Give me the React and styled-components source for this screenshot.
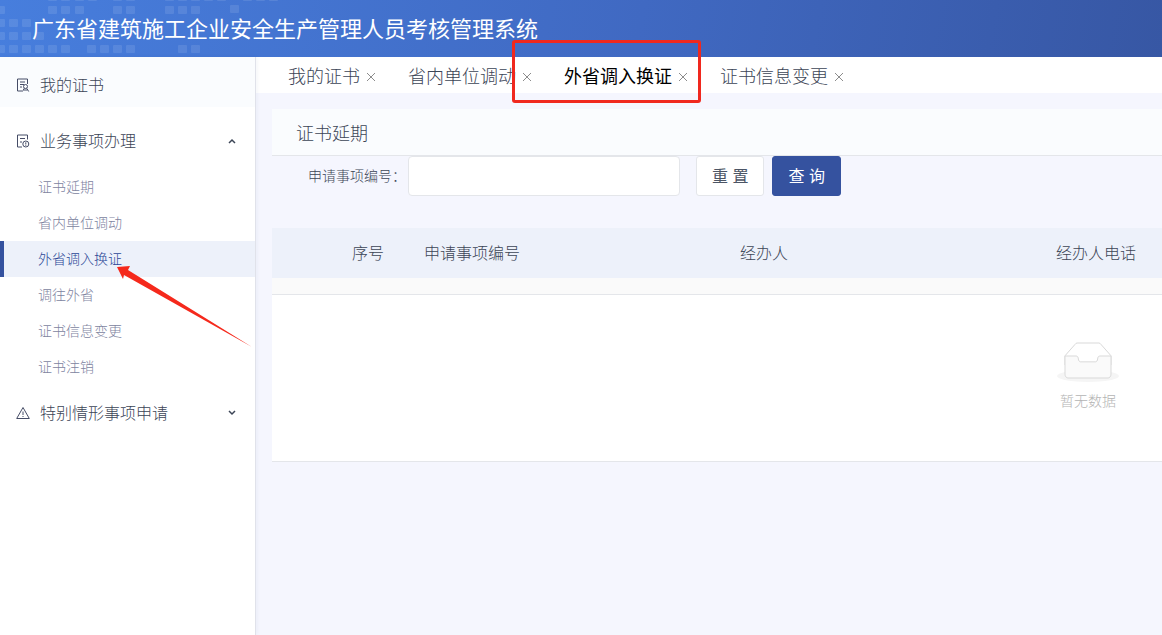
import styled, { createGlobalStyle } from 'styled-components';

const MENU = ['证书延期', '省内单位调动', '外省调入换证', '调往外省', '证书信息变更', '证书注销'];
const TABS = ['我的证书', '省内单位调动', '外省调入换证', '证书信息变更'];
const ACTIVE = '外省调入换证';

// lit squares of the header pattern: [y, [x, ...]]
const DOTS = [
  [-7, [48, 61, 75, 88, 113, 126, 165, 178, 191, 204, 217, 243, 256, 269]],
  [6, [-4, 48, 61, 75, 113, 126, 165, 178, 191]],
  [5, [230]],
  [19, [-4, 9, 22]],
  [32, [-4, 9, 22, 35]],
  [45, [-4, 9, 22, 35, 48, 61, 87, 100, 113, 126, 178, 191]],
];

const CertIcon = () => (
  <Glyph viewBox='0 0 14 14'>
    <path d='M11.500 6V1h-10v12H6M4 4h5M4 6.500h4M4 9h2' />
    <circle cx='9.500' cy='8.500' r='2' />
    <path d='M8.200 10.300L6.500 13.500M10.800 10.300l1.900 3.200M8 12h3.500' />
  </Glyph>
);

const TodoIcon = () => (
  <Glyph viewBox='0 0 14 14'>
    <path d='M11.500 5.500V1h-10v12H6' />
    <path d='M4 4.500h5M4 8h2' />
    <circle cx='9.800' cy='10' r='3' />
    <path d='M9.800 8.300v2.200M9.800 11v.8' />
  </Glyph>
);

const WarnIcon = () => (
  <Glyph viewBox='0 0 14 14'>
    <path d='M7 1.500L13.300 12.500H.700z' />
    <path d='M7 5.500v3.500M7 10v1' />
  </Glyph>
);

const EmptyIcon = () => (
  <EmptyPic viewBox='0 0 64 41'>
    <g transform='translate(0 1)' fill='none' fillRule='evenodd'>
      <ellipse fill='#f5f5f5' cx='32' cy='33' rx='31' ry='6' />
      <g fillRule='nonzero' stroke='#d9d9d9'>
        <path
          fill='#fff'
          d='M55 12.760L44.854 1.258C44.367.474 43.656 0 42.907 0H21.093c-.749 0-1.460.474-1.947 1.257L9 12.761V22h46v-9.240z'
        />
        <path
          fill='#fafafa'
          d='M41.613 15.931c0-1.605.994-2.930 2.227-2.931H55v18.137C55 33.260 53.680 35 52.050 35h-40.100C10.320 35 9 33.259 9 31.137V13h11.160c1.233 0 2.227 1.323 2.227 2.928v.022c0 1.605 1.005 2.901 2.237 2.901h14.752c1.232 0 2.237-1.308 2.237-2.913v-.007z'
        />
      </g>
    </g>
  </EmptyPic>
);

const App = () => {
  return (
    <>
      <GlobalStyle />
      <Page>
        <Header>
          <Pattern aria-hidden='true'>
            {DOTS.map(([y, xs]) => xs.map((x) => <rect key={`${x}-${y}`} x={x} y={y} width='9' height='8' rx='1' />))}
          </Pattern>
          <Title>广东省建筑施工企业安全生产管理人员考核管理系统</Title>
        </Header>
        <Body>
          <Sidebar>
            <Group $shade>
              <CertIcon />
              <span>我的证书</span>
            </Group>
            <Group>
              <TodoIcon />
              <span>业务事项办理</span>
              <Chevron viewBox='0 0 12 12'>
                <path d='M3 8l3-3 3 3' />
              </Chevron>
            </Group>
            <SubMenu>
              {MENU.map((item) => (
                <li key={item}>
                  <SubLink href='#' $active={item === ACTIVE}>
                    {item}
                  </SubLink>
                </li>
              ))}
            </SubMenu>
            <Group>
              <WarnIcon />
              <span>特别情形事项申请</span>
              <Chevron viewBox='0 0 12 12'>
                <path d='M3 4l3 3 3-3' />
              </Chevron>
            </Group>
            <Arrow viewBox='0 0 136 82' aria-hidden='true'>
              <path d='M0 1L13 0l-2 4L135 81 7 9l-1 4z' />
            </Arrow>
          </Sidebar>
          <Main>
            <TabBar>
              {TABS.map((tab) => (
                <Tab key={tab}>
                  <TabName type='button' $active={tab === ACTIVE}>
                    {tab}
                  </TabName>
                  <Close type='button' aria-label={`关闭${tab}`}>
                    <svg width='10' height='10' viewBox='0 0 10 10'>
                      <path d='M1 1l8 8M9 1l-8 8' />
                    </svg>
                  </Close>
                  {tab === ACTIVE && <Mark />}
                </Tab>
              ))}
            </TabBar>
            <Content>
              <PanelTitle>证书延期</PanelTitle>
              <Search>
                <label htmlFor='itemNo'>申请事项编号：</label>
                <input id='itemNo' type='text' />
                <Button type='reset'>重 置</Button>
                <Button type='submit' $primary>
                  查 询
                </Button>
              </Search>
              <TableWrap>
                <Table>
                  <colgroup>
                    <col width='136' />
                    <col width='316' />
                    <col width='316' />
                    <col width='316' />
                    <col />
                  </colgroup>
                  <thead>
                    <tr>
                      <th className='index'>序号</th>
                      <th>申请事项编号</th>
                      <th>经办人</th>
                      <th>经办人电话</th>
                      <th aria-label='操作' />
                    </tr>
                  </thead>
                  <tbody>
                    <tr className='gap'>
                      <td colSpan='5' />
                    </tr>
                    <tr>
                      <td colSpan='5' className='empty'>
                        <EmptyIcon />
                        <p>暂无数据</p>
                      </td>
                    </tr>
                  </tbody>
                </Table>
              </TableWrap>
            </Content>
          </Main>
        </Body>
      </Page>
    </>
  );
};

const GlobalStyle = createGlobalStyle`
  * {
    box-sizing: border-box;
  }
  body {
    margin: 0;
    background: #f5f6fe;
    color: #3c4556;
    font-family: 'Noto Sans CJK SC', sans-serif;
    font-size: 16px;
    font-weight: 300;
  }
  button, input {
    font: inherit;
    color: inherit;
  }
`;

const Page = styled.div`
  display: flex;
  flex-direction: column;
  min-height: 100vh;
`;

const Header = styled.header`
  position: relative;
  height: 57px;
  padding: 12px 32px;
  overflow: hidden;
  background: linear-gradient(100deg, #477edd 0%, #4069c2 55%, #3757a4 100%);
`;

const Pattern = styled.svg`
  position: absolute;
  top: 0;
  left: 0;
  width: 290px;
  height: 57px;
  fill: rgba(255, 255, 255, 0.1);
`;

const Title = styled.h1`
  position: relative;
  margin: 0;
  color: #fff;
  font-size: 22px;
  font-weight: 400;
  line-height: 30px;
  white-space: nowrap;
`;

const Body = styled.div`
  display: flex;
  flex: 1;
`;

const Sidebar = styled.nav`
  position: relative;
  flex: 0 0 256px;
  background: #fff;
  border-right: 1px solid #e0e2ea;
  box-shadow: 1px 0 4px rgba(40, 60, 120, 0.06);
`;

const Group = styled.div`
  display: flex;
  align-items: center;
  gap: 10px;
  height: ${({ $shade }) => ($shade ? '50px' : '56px')};
  margin-bottom: ${({ $shade }) => ($shade ? '6px' : '0')};
  padding: ${({ $shade }) => ($shade ? '6px 16px 0' : '0 16px')};
  background: ${({ $shade }) => ($shade ? '#fafcfe' : '#fff')};
  span {
    padding-bottom: 2px;
  }
`;

const Glyph = styled.svg`
  width: 14px;
  height: 14px;
  fill: none;
  stroke: #454c66;
`;

const Chevron = styled.svg`
  width: 12px;
  height: 12px;
  margin-left: auto;
  margin-right: 1px;
  fill: none;
  stroke: #3c4556;
  stroke-width: 1.5;
`;

const SubMenu = styled.ul`
  margin: 0;
  padding: 0;
  list-style: none;
`;

const SubLink = styled.a`
  display: block;
  height: 36px;
  padding-left: 34px;
  border-left: 4px solid ${({ $active }) => ($active ? '#35529f' : 'transparent')};
  background: ${({ $active }) => ($active ? '#edf1fa' : 'transparent')};
  color: ${({ $active }) => ($active ? '#2c4897' : '#80849f')};
  font-size: 14px;
  line-height: 34px;
  text-decoration: none;
`;

const Arrow = styled.svg`
  position: absolute;
  top: 209px;
  left: 117px;
  width: 136px;
  height: 82px;
  fill: #f5291c;
`;

const Main = styled.main`
  flex: 1;
  min-width: 0;
`;

const TabBar = styled.div`
  display: flex;
  gap: 32px;
  height: 36px;
  padding: 0 32px;
  background: #fff;
`;

const Tab = styled.div`
  position: relative;
  display: flex;
  gap: 6px;
`;

const TabName = styled.button`
  padding: 0;
  border: 0;
  background: none;
  color: ${({ $active }) => ($active ? '#000' : '#3c4556')};
  font-size: 18px;
  font-weight: ${({ $active }) => ($active ? 400 : 300)};
  line-height: 34px;
  white-space: nowrap;
`;

const Close = styled.button`
  display: flex;
  align-items: center;
  padding: 4px 0 0;
  border: 0;
  background: none;
  svg {
    fill: none;
    stroke: #8c8c8c;
  }
`;

const Mark = styled.span`
  position: absolute;
  top: -17px;
  left: -52px;
  width: 189px;
  height: 63px;
  border: 3px solid #f0281e;
  border-radius: 3px;
  pointer-events: none;
`;

const Content = styled.div`
  padding: 16px 0 0 16px;
`;

const PanelTitle = styled.h2`
  height: 47px;
  margin: 0;
  padding-left: 24px;
  border-bottom: 1px solid #e4e6ea;
  background: #fafcfe;
  font-size: 18px;
  font-weight: 300;
  line-height: 46px;
`;

const Search = styled.form`
  display: flex;
  padding-left: 36px;
  label {
    width: 100px;
    font-size: 14px;
    line-height: 38px;
    white-space: nowrap;
  }
  input {
    width: 272px;
    height: 40px;
    margin-right: 16px;
    padding: 0 12px;
    border: 1px solid #e4e6ea;
    border-radius: 4px;
    background: #fff;
  }
`;

const Button = styled.button`
  height: 40px;
  min-width: 68px;
  margin-right: 8px;
  padding: 0 15px 2px;
  border: 1px solid ${({ $primary }) => ($primary ? '#35529f' : '#e4e6ea')};
  border-radius: 3px;
  background: ${({ $primary }) => ($primary ? '#35529f' : '#fff')};
  color: ${({ $primary }) => ($primary ? '#fff' : '#4c5565')};
  font-family: 'Liberation Sans', 'Noto Sans CJK SC', sans-serif;
  font-weight: 400;
`;

const TableWrap = styled.div`
  margin-top: 32px;
  overflow: hidden;
`;

const Table = styled.table`
  width: 1632px;
  border-collapse: collapse;
  table-layout: fixed;
  th {
    height: 50px;
    padding: 0 16px 2px;
    background: #edf1fa;
    font-weight: 300;
    text-align: left;
  }
  .index {
    padding-right: 24px;
    text-align: right;
  }
  td {
    padding: 0;
    border-bottom: 1px solid #e4e6ea;
    background: #fff;
  }
  .gap td {
    height: 16px;
    background: #fafafa;
  }
  .empty {
    height: 167px;
    padding-bottom: 2px;
    color: #b4b4b4;
    font-size: 14px;
    line-height: 22px;
    text-align: center;
  }
  p {
    margin: 6px 0 0;
  }
`;

const EmptyPic = styled.svg`
  display: block;
  width: 64px;
  height: 41px;
  margin: 0 auto;
`;

export default App;
